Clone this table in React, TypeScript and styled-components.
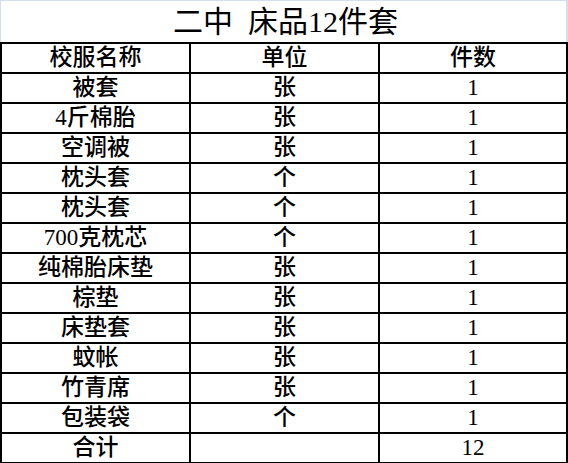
import React from 'react'
import styled, { createGlobalStyle } from 'styled-components'

const GlobalStyle = createGlobalStyle`
  html, body {
    margin: 0;
    padding: 0;
    background: #ffffff;
  }
  body {
    font-family: "Liberation Serif", "Noto Sans CJK SC", serif;
    color: #000;
  }
`

const gridBlue = '#d5deec'

const Sheet = styled.div`
  width: 566px;
`

const Title = styled.div`
  height: 41px;
  border-top: 1px solid ${gridBlue};
  border-left: 1px solid ${gridBlue};
  border-right: 2px solid ${gridBlue};
  margin-right: -2px;
  display: flex;
  align-items: center;
  justify-content: center;
  padding-left: 4px;
  font-size: 30px;
  line-height: 1;
  white-space: pre;
  font-weight: 400;
`

const Table = styled.table`
  border-collapse: collapse;
  width: 566px;
  table-layout: fixed;
`

const Cell = styled.td`
  border: 2px solid #000;
  height: 28px;
  padding: 0;
  text-align: center;
  vertical-align: middle;
  font-size: 23px;
  line-height: 28px;
  font-weight: 500;
`

const HeadCell = styled(Cell).attrs({ as: 'th' })`
  font-weight: 500;
`

const items: [string, string, string][] = [
  ['被套', '张', '1'],
  ['4斤棉胎', '张', '1'],
  ['空调被', '张', '1'],
  ['枕头套', '个', '1'],
  ['枕头套', '个', '1'],
  ['700克枕芯', '个', '1'],
  ['纯棉胎床垫', '张', '1'],
  ['棕垫', '张', '1'],
  ['床垫套', '张', '1'],
  ['蚊帐', '张', '1'],
  ['竹青席', '张', '1'],
  ['包装袋', '个', '1'],
]

export default function App() {
  return (
    <Sheet>
      <GlobalStyle />
      <Title>{'二中  床品12件套'}</Title>
      <Table>
        <colgroup>
          <col style={{ width: 189 }} />
          <col style={{ width: 189 }} />
          <col style={{ width: 188 }} />
        </colgroup>
        <thead>
          <tr>
            <HeadCell>校服名称</HeadCell>
            <HeadCell>单位</HeadCell>
            <HeadCell>件数</HeadCell>
          </tr>
        </thead>
        <tbody>
          {items.map(([name, unit, count], i) => (
            <tr key={i}>
              <Cell>{name}</Cell>
              <Cell>{unit}</Cell>
              <Cell>{count}</Cell>
            </tr>
          ))}
          <tr>
            <Cell>合计</Cell>
            <Cell />
            <Cell>12</Cell>
          </tr>
        </tbody>
      </Table>
    </Sheet>
  )
}
